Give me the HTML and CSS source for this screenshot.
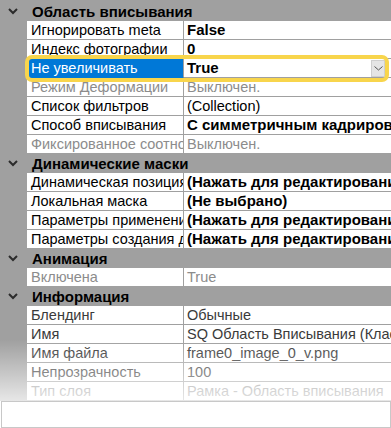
FILE: index.html
```html
<!DOCTYPE html>
<html lang="ru">
  <head>
    <meta charset="UTF-8" />
    <title>Свойства</title>
    <link rel="stylesheet" href="styles.css">
  </head>
  <body>
    <div class="grid">
      <div class="cat"><span class="chev"><svg width="10" height="7" viewBox="0 0 10 7"><path d="M1 1 L5 5 L9 1" /></svg></span>Область вписывания</div>
      <div class="row"><div class="name">Игнорировать meta</div><div class="val bold">False</div></div>
      <div class="row"><div class="name">Индекс фотографии</div><div class="val bold">0</div></div>
      <div class="row selected">
        <div class="name">Не увеличивать</div>
        <div class="val bold">True<span class="drop"><svg width="9" height="5" viewBox="0 0 9 5"><path d="M0.5 0.5 L4.5 4 L8.5 0.5" /></svg></span></div>
      </div>
      <div class="row off"><div class="name">Режим Деформации</div><div class="val">Выключен.</div></div>
      <div class="row"><div class="name">Список фильтров</div><div class="val">(Collection)</div></div>
      <div class="row"><div class="name">Способ вписывания</div><div class="val bold">С симметричным кадрированием</div></div>
      <div class="row off"><div class="name">Фиксированное соотношение</div><div class="val">Выключен.</div></div>

      <div class="cat"><span class="chev"><svg width="10" height="7" viewBox="0 0 10 7"><path d="M1 1 L5 5 L9 1" /></svg></span>Динамические маски</div>
      <div class="row"><div class="name">Динамическая позиция</div><div class="val bold">(Нажать для редактирования)</div></div>
      <div class="row"><div class="name">Локальная маска</div><div class="val bold">(Не выбрано)</div></div>
      <div class="row"><div class="name">Параметры применения</div><div class="val bold">(Нажать для редактирования)</div></div>
      <div class="row"><div class="name">Параметры создания динамики</div><div class="val bold">(Нажать для редактирования)</div></div>

      <div class="cat"><span class="chev"><svg width="10" height="7" viewBox="0 0 10 7"><path d="M1 1 L5 5 L9 1" /></svg></span>Анимация</div>
      <div class="row off"><div class="name">Включена</div><div class="val">True</div></div>

      <div class="cat"><span class="chev"><svg width="10" height="7" viewBox="0 0 10 7"><path d="M1 1 L5 5 L9 1" /></svg></span>Информация</div>
      <div class="row info"><div class="name">Блендинг</div><div class="val">Обычные</div></div>
      <div class="row info"><div class="name">Имя</div><div class="val">SQ Область Вписывания (Класс)</div></div>
      <div class="row info"><div class="name">Имя файла</div><div class="val">frame0_image_0_v.png</div></div>
      <div class="row info"><div class="name">Непрозрачность</div><div class="val">100</div></div>
      <div class="row off"><div class="name">Тип слоя</div><div class="val">Рамка - Область вписывания</div></div>

      <!-- жёлтая подсветка выбранной строки -->
      <div class="highlight"></div>
      <div class="fade"></div>
    </div>
    <div class="desc"></div>
  </body>
</html>
```

FILE: styles.css
```css
body {
  margin: 0;
  width: 391px;
  height: 428px;
  overflow: hidden;
  background-color: #fff;
  font-family: "Liberation Sans", Arial, sans-serif;
  font-size: 14.5px;
  color: #000;
}
.grid {
  position: relative;
  height: 399px;
  padding-top: 2px;
  background-color: #a0a0a0;
  overflow: hidden;
}
.cat {
  display: flex;
  align-items: center;
  height: 19px;
  font-weight: bold;
  font-size: 15px;
  background-color: #a0a0a0;
}
.chev {
  width: 32px;
  display: flex;
  justify-content: center;
  box-sizing: border-box;
  padding-right: 6px;
}
.chev path {
  fill: none;
  stroke: #2b2b2b;
  stroke-width: 2;
}
.row {
  display: grid;
  grid-template-columns: 157px 1fr;
  margin-left: 27px;
  height: 19px;
}
.name,
.val {
  background-color: #fff;
  border-bottom: 1px solid #a0a0a0;
  white-space: nowrap;
  overflow: hidden;
  line-height: 18px;
}
.name {
  padding-left: 4px;
  border-right: 1px solid #a0a0a0;
}
.val {
  padding-left: 3px;
  position: relative;
}
.bold {
  font-weight: bold;
  font-size: 15px;
}
.off .name,
.off .val {
  color: #8c8c8c;
}
.info .name,
.info .val {
  color: #3a3a3a;
}
.selected .name {
  background-color: #0078d7;
  color: #fff;
  border-bottom-color: #0078d7;
}
.drop {
  position: absolute;
  right: 6px;
  top: 1px;
  width: 12px;
  height: 15px;
  background-color: #e5e5e5;
  border: 1px solid #cfcfcf;
  display: flex;
  align-items: center;
  justify-content: center;
}
.drop path {
  fill: none;
  stroke: #555;
  stroke-width: 1;
}
.highlight {
  position: absolute;
  left: 25px;
  top: 55px;
  width: 356px;
  height: 19px;
  border: 4px solid #f8d54c;
  border-radius: 7px;
}
.fade {
  position: absolute;
  left: 0;
  right: 0;
  top: 340px;
  bottom: 0;
  background: linear-gradient(rgba(255, 255, 255, 0), rgba(255, 255, 255, 0.75));
}
.desc {
  height: 25px;
  border: 1px solid #c8c8c8;
  margin-left: 1px;
  background-color: #fff;
}
```
